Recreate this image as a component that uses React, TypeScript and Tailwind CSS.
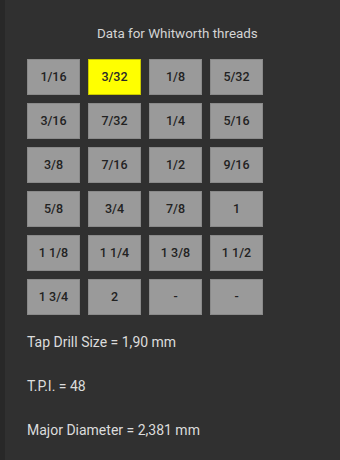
import React from "react";

const sizes = [
  "1/16", "3/32", "1/8", "5/32",
  "3/16", "7/32", "1/4", "5/16",
  "3/8", "7/16", "1/2", "9/16",
  "5/8", "3/4", "7/8", "1",
  "1 1/8", "1 1/4", "1 3/8", "1 1/2",
  "1 3/4", "2", "-", "-",
];

export default function App() {
  return (
    <div className="w-[340px] h-[460px] bg-[#303030] flex font-['Roboto',sans-serif] overflow-hidden">
      <div className="w-[5px] h-full bg-[#282828]" />
      <div className="flex flex-col pl-[22px]">
        <div className="pt-[25px] h-[59px] pl-[70px] text-[13.4px] leading-[18px] text-[#d4d4d4]">
          Data for Whitworth threads
        </div>
        <div className="grid grid-cols-[repeat(4,53px)] auto-rows-[36px] gap-x-[8px] gap-y-[8px]">
          {sizes.map((s, i) => (
            <div
              key={i}
              className={
                i === 1
                  ? "flex items-center justify-center bg-[#ffff00] border border-[#c8c800] text-[12.5px] font-medium text-[#2a2a2a]"
                  : "flex items-center justify-center bg-[#9a9a9a] border border-[#8a8a8a] text-[12.5px] font-medium text-[#222]"
              }
            >
              {s}
            </div>
          ))}
        </div>
        <div className="flex flex-col mt-[17px] gap-[24px] text-[14px] leading-[20px] text-[#dcdcdc]">
          <div>Tap Drill Size = 1,90 mm</div>
          <div>T.P.I. = 48</div>
          <div>Major Diameter = 2,381 mm</div>
        </div>
      </div>
    </div>
  );
}
